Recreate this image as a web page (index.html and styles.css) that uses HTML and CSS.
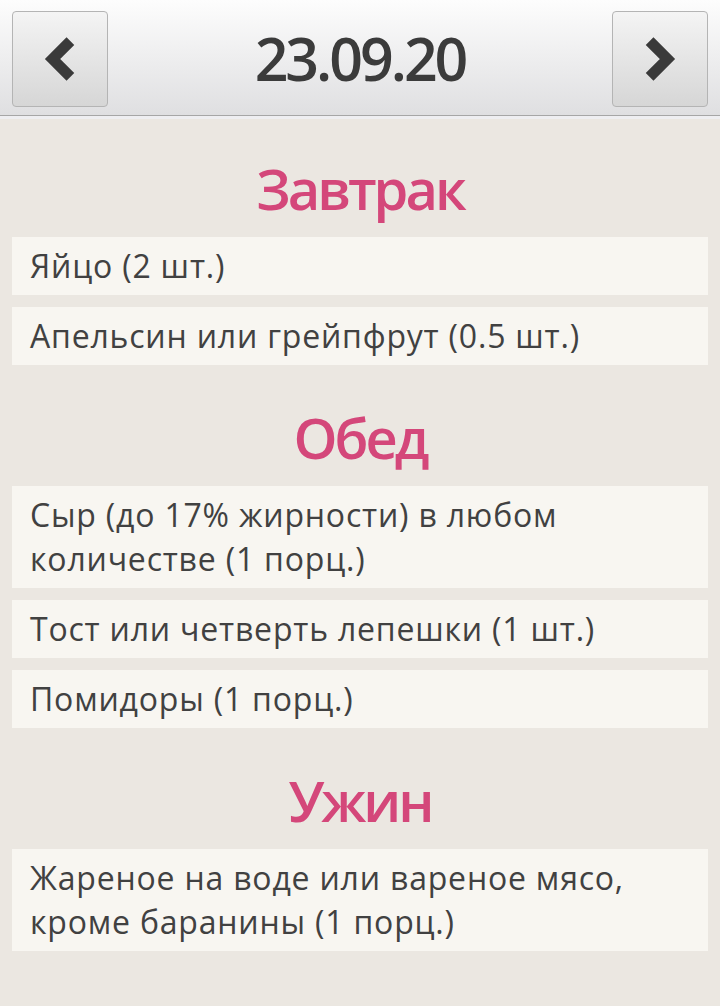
FILE: index.html
```html
<!doctype html>
<html>
<head>
<meta charset="utf-8">
<title>Меню на день</title>
<link rel="stylesheet" href="styles.css">
</head>
<body>

<header class="topbar">
  <button class="nav-btn" title="Предыдущий день">
    <svg width="95" height="95" viewBox="0 0 95 95"><path d="M58 30 L40 48 L58 66" /></svg>
  </button>
  <h1 class="date">23.09.20</h1>
  <button class="nav-btn" title="Следующий день">
    <svg width="95" height="95" viewBox="0 0 95 95"><path d="M37 30 L55 48 L37 66" /></svg>
  </button>
</header>

<!--========================================================================-->

<section class="meal">
  <h2>Завтрак</h2>
  <ul class="items">
    <li>Яйцо (2 шт.)</li>
    <li>Апельсин или грейпфрут (0.5 шт.)</li>
  </ul>
</section>

<section class="meal">
  <h2>Обед</h2>
  <ul class="items">
    <li>Сыр (до 17% жирности) в любом количестве (1 порц.)</li>
    <li>Тост или четверть лепешки (1 шт.)</li>
    <li>Помидоры (1 порц.)</li>
  </ul>
</section>

<section class="meal">
  <h2>Ужин</h2>
  <ul class="items">
    <li>Жареное на воде или вареное мясо, кроме баранины (1 порц.)</li>
  </ul>
</section>

</body>
</html>
```

FILE: styles.css
```css
body {
  margin: 0 ;
  min-height: 1006px ;
  background-color: #ebe7e1 ;
  color: #414141 ;
  font-family: "Open Sans", "DejaVu Sans", sans-serif ;
}

.topbar {
  display: flex ;
  align-items: center ;
  justify-content: space-between ;
  height: 116px ;
  padding: 0 12px ;
  box-sizing: border-box ;
  background: linear-gradient(#fdfdfd, #dfdfe1) ;
  border-bottom: 1px solid #a6a6a6 ;
  box-shadow: 0 3px 0 #eeeef1 ;
}

.nav-btn {
  width: 96px ;
  height: 96px ;
  margin-top: 2px ;
  padding: 0 ;
  border: 1px solid #b4b4b4 ;
  border-radius: 4px ;
  background: linear-gradient(#f4f4f4, #d6d6d6) ;
  display: flex ;
  align-items: center ;
  justify-content: center ;
}

.nav-btn svg path {
  fill: none ;
  stroke: #3a3a3a ;
  stroke-width: 11 ;
}

.date {
  margin: 0 ;
  font-size: 59px ;
  font-weight: 600 ;
  color: #3b3b3b ;
  letter-spacing: -3px ;
}

.meal h2 {
  margin: 37px 0 14px ;
  line-height: 70px ;
  font-size: 56px ;
  font-weight: 600 ;
  text-align: center ;
  color: #d4477a ;
  letter-spacing: -3px ;
}

.items {
  list-style: none ;
  margin: 0 ;
  padding: 0 ;
}

.items li {
  margin: 0 12px 12px ;
  padding: 7px 18px ;
  background-color: #f8f6f1 ;
  font-size: 32px ;
  line-height: 44px ;
  letter-spacing: 0.8px ;
}
```
